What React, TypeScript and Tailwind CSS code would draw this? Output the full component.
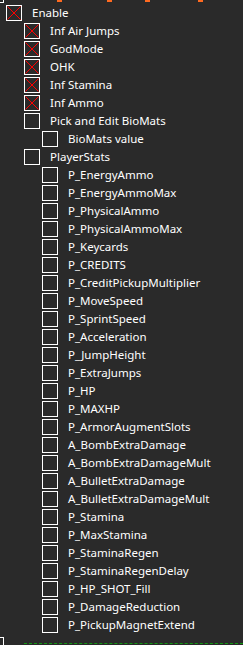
import React from 'react';

type Item = { label: string; level: number; checked?: boolean };

const items: Item[] = [
  { label: 'Enable', level: 0, checked: true },
  { label: 'Inf Air Jumps', level: 1, checked: true },
  { label: 'GodMode', level: 1, checked: true },
  { label: 'OHK', level: 1, checked: true },
  { label: 'Inf Stamina', level: 1, checked: true },
  { label: 'Inf Ammo', level: 1, checked: true },
  { label: 'Pick and Edit BioMats', level: 1 },
  { label: 'BioMats value', level: 2 },
  { label: 'PlayerStats', level: 1 },
  ...[
    'P_EnergyAmmo',
    'P_EnergyAmmoMax',
    'P_PhysicalAmmo',
    'P_PhysicalAmmoMax',
    'P_Keycards',
    'P_CREDITS',
    'P_CreditPickupMultiplier',
    'P_MoveSpeed',
    'P_SprintSpeed',
    'P_Acceleration',
    'P_JumpHeight',
    'P_ExtraJumps',
    'P_HP',
    'P_MAXHP',
    'P_ArmorAugmentSlots',
    'A_BombExtraDamage',
    'A_BombExtraDamageMult',
    'A_BulletExtraDamage',
    'A_BulletExtraDamageMult',
    'P_Stamina',
    'P_MaxStamina',
    'P_StaminaRegen',
    'P_StaminaRegenDelay',
    'P_HP_SHOT_Fill',
    'P_DamageReduction',
    'P_PickupMagnetExtend',
  ].map((label) => ({ label, level: 2 })),
];

const indent = ['pl-[6px]', 'pl-[24px]', 'pl-[42px]'];

function CheckBox({ checked }: { checked?: boolean }) {
  return (
    <div className="w-4 h-4 shrink-0 border border-white bg-[#2a2a2a]">
      {checked && (
        <svg width="14" height="14" viewBox="0 0 14 14" className="block">
          <line x1="0.5" y1="0.5" x2="13.5" y2="13.5" stroke="#ff0000" strokeWidth="1" />
          <line x1="13.5" y1="0.5" x2="0.5" y2="13.5" stroke="#ff0000" strokeWidth="1" />
          <rect x="6" y="6" width="2" height="2" fill="#ff0000" />
        </svg>
      )}
    </div>
  );
}

export default function App() {
  return (
    <div className="w-[243px] h-[645px] overflow-hidden flex flex-col bg-[#2a2a2a] text-white font-['Noto_Sans',sans-serif] text-[11.5px]">
      {/* tail of the entry above: tree corner and orange text fragments */}
      <div className="flex h-[4px] shrink-0">
        <div className="w-[4px] h-[3px] border-r border-b border-white" />
        <div className="ml-[53px] w-[5px] h-[2px] bg-[#ff6a20]" />
        <div className="ml-[45px] w-[5px] h-[2px] bg-[#ff6a20]" />
        <div className="ml-[33px] w-[5px] h-[2px] bg-[#ff6a20]" />
        <div className="ml-[48px] w-[5px] h-[2px] bg-[#ff6a20]" />
      </div>

      <div className="flex flex-col">
        {items.map((it) => (
          <div key={it.label} className={`flex items-center h-[18px] gap-[10px] ${indent[it.level]}`}>
            <CheckBox checked={it.checked} />
            <span className="leading-none whitespace-nowrap">{it.label}</span>
          </div>
        ))}
      </div>

      {/* start of the next entry below */}
      <div className="flex mt-[3px] h-[8px] shrink-0">
        <div className="w-[4px] h-[8px] border-r border-t border-white" />
        <div className="flex-1 ml-[20px] mt-[6px] h-0 border-t border-dashed border-[#119911]" />
      </div>
    </div>
  );
}
